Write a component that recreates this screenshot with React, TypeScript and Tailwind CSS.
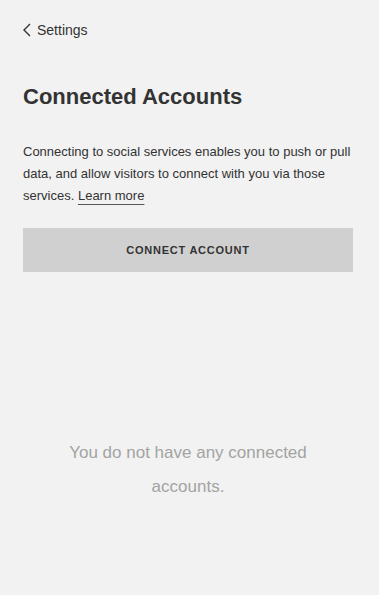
export default function App() {
  return (
    <div
      className="min-h-[595px] w-full bg-[#f2f2f2] flex flex-col pl-[23px] pr-[26px] text-[#333]"
      style={{ fontFamily: '"Liberation Sans", Arial, sans-serif' }}
    >
      {/* Back link */}
      <div className="flex items-center gap-[6px] pt-[20px] h-[40px] text-[14px] text-[#333]">
        <svg width="8" height="14" viewBox="0 0 8 14" fill="none" stroke="#333" strokeWidth="1.4">
          <path d="M7 1L1 7l6 6" />
        </svg>
        <span>Settings</span>
      </div>

      {/* Title */}
      <h1 className="mt-[42px] text-[22px] font-bold leading-[30px] text-[#333]">Connected Accounts</h1>

      {/* Description */}
      <p className="mt-[29px] text-[13px] leading-[22px] text-[#333]">
        Connecting to social services enables you to push or pull data, and allow visitors to connect with you via
        those services.{" "}
        <a className="underline decoration-[#555] underline-offset-[4px]">Learn more</a>
      </p>

      {/* Button */}
      <button className="mt-[21px] h-[44px] w-full bg-[#d0d0d0] text-[11px] font-bold tracking-[0.07em] text-[#333]">
        CONNECT ACCOUNT
      </button>

      {/* Empty state */}
      <p className="mt-[164px] text-center text-[17px] leading-[34px] text-[#a3a3a3] px-[36px]">
        You do not have any connected accounts.
      </p>
    </div>
  );
}
